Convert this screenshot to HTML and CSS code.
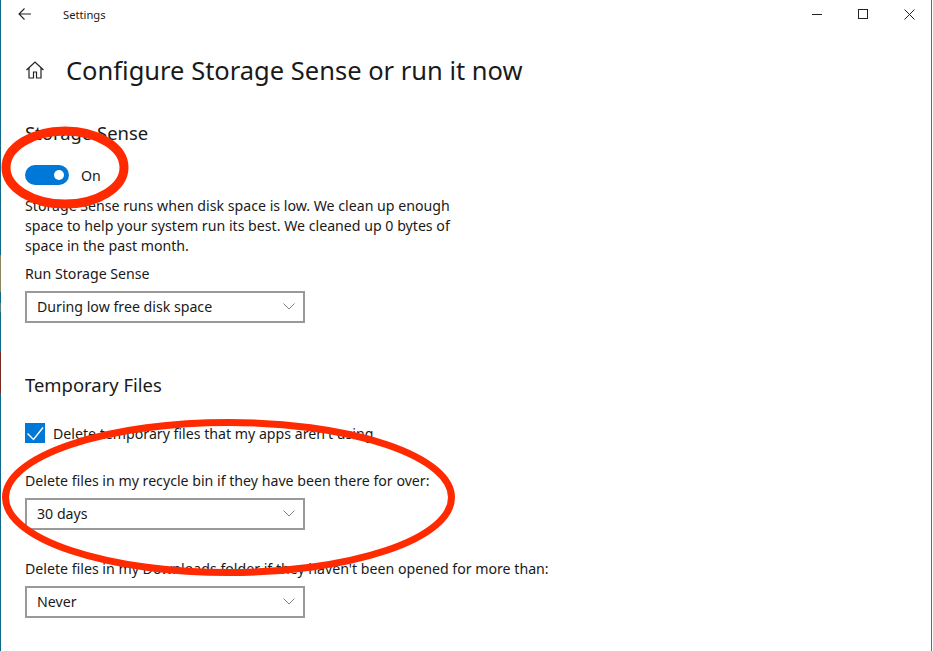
FILE: index.html
```html
<!DOCTYPE html>
<html lang="en">
<head>
<meta charset="utf-8">
<title>Settings</title>
<link rel="stylesheet" href="styles.css">
</head>
<body>
<div class="window">
  <header class="titlebar">
    <svg class="back" width="14" height="12" viewBox="0 0 14 12"><path d="M6.500.5 1 6l5.500 5.500M1 6h12" fill="none" stroke="#222" stroke-width="1.1"/></svg>
    <span class="app-name">Settings</span>
    <div class="controls">
      <svg width="11" height="11" viewBox="0 0 11 11"><path d="M0 5.500h10" stroke="#222" fill="none"/></svg>
      <svg width="11" height="11" viewBox="0 0 11 11"><rect x=".5" y=".5" width="9" height="9" stroke="#222" fill="none"/></svg>
      <svg width="11" height="11" viewBox="0 0 11 11"><path d="M.5.500l10 10M10.500.5l-10 10" stroke="#222" fill="none"/></svg>
    </div>
  </header>
  <main class="content">
    <div class="page-head">
      <svg class="home" width="20" height="20" viewBox="0 0 20 20"><path d="M1.500 10 10 2l8.500 8M4 8v10h4.500v-6h3v6H16V8" fill="none" stroke="#222" stroke-width="1.200"/></svg>
      <h1>Configure Storage Sense or run it now</h1>
    </div>
    <h2 class="sense-title">Storage Sense</h2>
    <div class="toggle-row">
      <span class="toggle"><span class="knob"></span></span>
      <span>On</span>
    </div>
    <p class="desc">Storage Sense runs when disk space is low. We clean up enough space to help your system run its best. We cleaned up 0 bytes of space in the past month.</p>
    <div class="label run-label">Run Storage Sense</div>
    <div class="select"><span>During low free disk space</span><svg width="12" height="7" viewBox="0 0 12 7"><path d="M.5.500 6 6l5.500-5.500" fill="none" stroke="#808080"/></svg></div>
    <h2 class="temp-title">Temporary Files</h2>
    <div class="check-row">
      <span class="check"><svg width="20" height="20" viewBox="0 0 20 20"><path d="M2.500 10.500 8.500 16.500 18 4.500" fill="none" stroke="#fff" stroke-width="1.400"/></svg></span>
      <span>Delete temporary files that my apps aren't using</span>
    </div>
    <div class="label bin-label">Delete files in my recycle bin if they have been there for over:</div>
    <div class="select"><span>30 days</span><svg width="12" height="7" viewBox="0 0 12 7"><path d="M.5.500 6 6l5.500-5.500" fill="none" stroke="#808080"/></svg></div>
    <div class="label dl-label">Delete files in my Downloads folder if they haven't been opened for more than:</div>
    <div class="select"><span>Never</span><svg width="12" height="7" viewBox="0 0 12 7"><path d="M.5.500 6 6l5.500-5.500" fill="none" stroke="#808080"/></svg></div>
  </main>
  <svg class="annotations" width="933" height="651" viewBox="0 0 933 651">
    <ellipse cx="65" cy="167.500" rx="59" ry="36.500" fill="none" stroke="#ff2a00" stroke-width="9"/>
    <ellipse cx="228.500" cy="497.500" rx="223" ry="75" fill="none" stroke="#ff2a00" stroke-width="7"/>
  </svg>
</div>
</body>
</html>
```
FILE: styles.css
```css
* { box-sizing: border-box; }
html, body { margin: 0; height: 100%; }
body { background: #fff; overflow: hidden; }
.window {
  position: relative;
  width: 933px;
  height: 651px;
  overflow: hidden;
  background: #fff;
  color: #1a1a1a;
  font-family: "Noto Sans", "Open Sans", sans-serif;
  font-size: 14.160px;
}
.window::before {
  content: "";
  position: absolute;
  left: 0;
  top: 0;
  width: 1px;
  height: 100%;
  background: linear-gradient(to bottom,
    #12688a 0, #12688a 255px,
    #8a8660 255px, #8a8660 292px,
    #12688a 292px, #12688a 303px,
    #5a8080 303px, #5a8080 312px,
    #12688a 312px, #12688a 352px,
    #7a2820 352px, #7a2820 393px,
    #12688a 393px, #12688a 100%);
}
.window::after {
  content: "";
  position: absolute;
  left: 931px;
  top: 0;
  width: 1px;
  height: 100%;
  background: #666;
}
.titlebar { display: flex; align-items: center; height: 28px; padding-left: 18px; }
.back { flex: none; }
.app-name { margin-left: 31px; font-size: 11.200px; }
.controls { margin-left: auto; display: flex; gap: 35px; padding-right: 18px; }
.content { padding: 0 0 0 25px; }
.page-head { display: flex; align-items: center; height: 50px; margin-top: 17px; }
.home { margin-right: 21px; flex: none; }
h1 { margin: 0; font-size: 25.500px; font-weight: 400; }
h2 { margin: 0; font-size: 18.450px; font-weight: 400; line-height: 24px; }
.sense-title { margin-top: 26px; }
.toggle-row { display: flex; align-items: center; gap: 12px; height: 24px; margin-top: 18px; }
.toggle { display: flex; align-items: center; justify-content: flex-end; width: 44px; height: 20px; border-radius: 10px; background: #0078d7; padding-right: 5px; }
.knob { width: 10px; height: 10px; border-radius: 50%; background: #fff; }
.desc { margin: 9px 0 0; width: 432px; line-height: 20px; }
.label { line-height: 20px; }
.run-label { margin-top: 8px; }
.select { display: flex; align-items: center; justify-content: space-between; width: 280px; height: 32px; border: 2px solid #999; padding: 0 8px 2px 10px; margin-top: 7px; }
.temp-title { margin-top: 50px; }
.check-row { display: flex; align-items: center; gap: 8px; height: 20px; margin-top: 26px; }
.check { display: flex; width: 20px; height: 20px; background: #0078d7; }
.bin-label { margin-top: 28px; }
.dl-label { margin-top: 29px; }
.annotations { position: absolute; left: 0; top: 0; pointer-events: none; }
```
